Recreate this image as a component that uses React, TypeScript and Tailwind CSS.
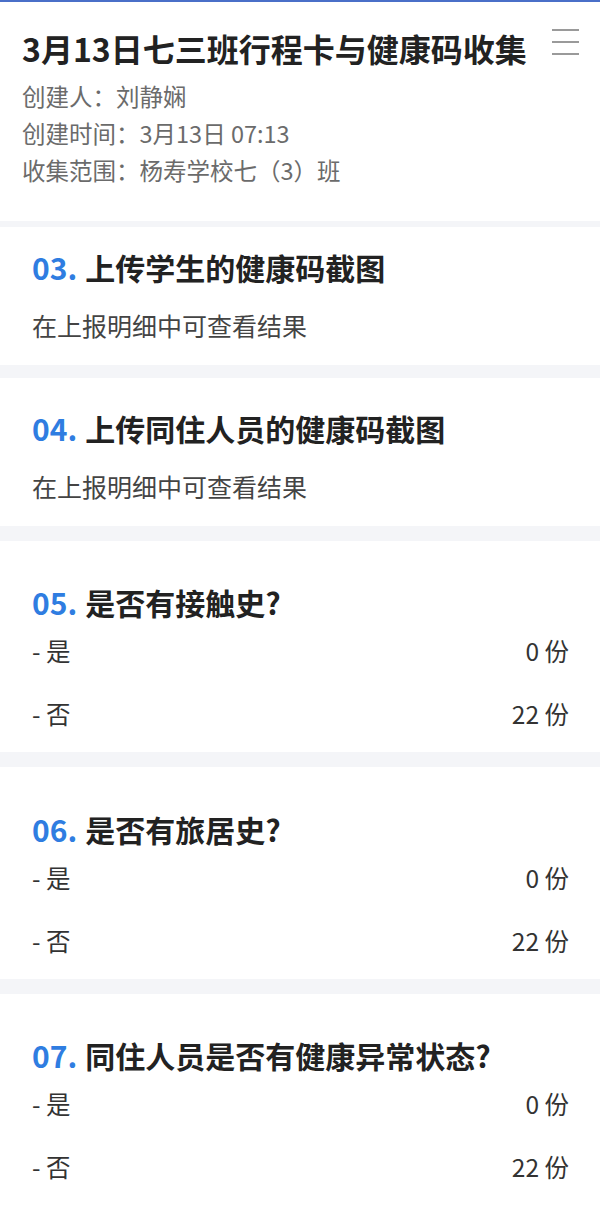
import React from 'react';

const font = { fontFamily: '"Noto Sans CJK SC", "Noto Sans", sans-serif' };

const meta = ['创建人：刘静娴', '创建时间：3月13日 07:13', '收集范围：杨寿学校七（3）班'];

interface Question {
  no: string;
  title: string;
  note?: string;
  options?: { label: string; count: number }[];
}

const yesNo = [
  { label: '是', count: 0 },
  { label: '否', count: 22 },
];

const questions: Question[] = [
  { no: '03.', title: '上传学生的健康码截图', note: '在上报明细中可查看结果' },
  { no: '04.', title: '上传同住人员的健康码截图', note: '在上报明细中可查看结果' },
  { no: '05.', title: '是否有接触史?', options: yesNo },
  { no: '06.', title: '是否有旅居史?', options: yesNo },
  { no: '07.', title: '同住人员是否有健康异常状态?', options: yesNo },
];

const Divider = ({ h }: { h: string }) => <div className={`w-full bg-[#f4f5f8] ${h}`} />;

const QuestionCard = ({ q, pt }: { q: Question; pt: string }) => (
  <div className={`bg-white px-[32px] pr-[31px] ${pt}`}>
    <div className="flex h-[40px] items-center text-[30px] font-bold leading-none text-[#222]">
      <span className="mr-[8px] text-[#2f7de1]">{q.no}</span>
      <span>{q.title}</span>
    </div>
    {q.note && (
      <div className="mt-[21px] flex h-[36px] items-center pb-[21px] text-[25px] text-[#444]" style={{ boxSizing: 'content-box' }}>
        {q.note}
      </div>
    )}
    {q.options && (
      <div className="pb-[20px]">
        {q.options.map((o, i) => (
          <div
            key={o.label}
            className={`flex h-[36px] items-center justify-between text-[24.5px] text-[#333] ${i === 0 ? 'mt-[11px]' : 'mt-[27px]'}`}
          >
            <span>- {o.label}</span>
            <span>{o.count} 份</span>
          </div>
        ))}
      </div>
    )}
  </div>
);

export default function App() {
  return (
    <div className="min-h-[1205px] w-[600px] overflow-hidden bg-white" style={font}>
      <div className="h-[2px] bg-[#4a6fc8]" />

      {/* header */}
      <div className="relative bg-white px-[22px] pt-[26px] pb-[32px]">
        <div className="flex h-[40px] items-center text-[32px] font-bold leading-none text-[#222]">
          3月13日七三班行程卡与健康码收集
        </div>
        <div className="absolute right-[21px] top-[27px] flex w-[27px] flex-col gap-[10.5px]">
          <div className="h-[1.5px] bg-[#9a9a9a]" />
          <div className="h-[1.5px] bg-[#9a9a9a]" />
          <div className="h-[1.5px] bg-[#9a9a9a]" />
        </div>
        <div className="mt-[10px] flex flex-col text-[23.5px] text-[#6b6b6b]">
          {meta.map((m) => (
            <div key={m} className="flex h-[37px] items-center">
              {m}
            </div>
          ))}
        </div>
      </div>

      <Divider h="h-[6px]" />
      <QuestionCard q={questions[0]} pt="pt-[20px]" />
      <Divider h="h-[13px]" />
      <QuestionCard q={questions[1]} pt="pt-[30px]" />
      <Divider h="h-[15px]" />
      <QuestionCard q={questions[2]} pt="pt-[41px]" />
      <Divider h="h-[15px]" />
      <QuestionCard q={questions[3]} pt="pt-[42px]" />
      <Divider h="h-[15px]" />
      <QuestionCard q={questions[4]} pt="pt-[41px]" />
    </div>
  );
}
